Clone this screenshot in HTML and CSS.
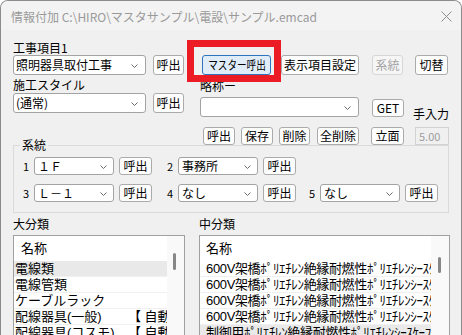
FILE: index.html
```html
<!DOCTYPE html>
<html lang="ja">
<head>
<meta charset="utf-8">
<link rel="stylesheet" href="styles.css">
</head>
<body>
<div class="window">
  <div class="titlebar">
    <span class="title">情報付加 C:\HIRO\マスタサンプル\電設\サンプル.emcad</span>
    <svg class="close" width="11" height="11" viewBox="0 0 11 11"><path d="M0.5 0.5 L10.5 10.5 M10.5 0.5 L0.5 10.5" stroke="#8f8f8f" stroke-width="1" fill="none"/></svg>
  </div>
  <div class="content">
    <div class="top">
      <div class="col-left">
        <div class="label lbl-1">工事項目1</div>
        <div class="row">
          <div class="combo combo-main"><span class="ctext">照明器具取付工事</span><svg class="chev" width="7" height="4" viewBox="0 0 7 4"><path d="M0.5 0.5 L3.5 3.5 L6.5 0.5" stroke="#6a6a6a" fill="none"/></svg></div>
          <div class="btn btn-call-l">呼出</div>
        </div>
        <div class="label lbl-2">施工スタイル</div>
        <div class="row">
          <div class="combo combo-main"><span class="ctext">(通常)</span><svg class="chev" width="7" height="4" viewBox="0 0 7 4"><path d="M0.5 0.5 L3.5 3.5 L6.5 0.5" stroke="#6a6a6a" fill="none"/></svg></div>
          <div class="btn btn-call-l">呼出</div>
        </div>
      </div>
      <div class="col-right">
        <div class="row">
          <div class="master-wrap">
            <div class="btn btn-master"><span class="narrow">マスター呼出</span></div>
            <div class="highlight"></div>
          </div>
          <div class="btn btn-disp">表示項目設定</div>
          <div class="btn btn-kei disabled">系統</div>
          <div class="btn btn-kiri">切替</div>
        </div>
        <div class="label lbl-abbr">略称ー</div>
        <div class="row">
          <div class="combo combo-abbr"><span class="ctext"></span><svg class="chev" width="7" height="4" viewBox="0 0 7 4"><path d="M0.5 0.5 L3.5 3.5 L6.5 0.5" stroke="#6a6a6a" fill="none"/></svg></div>
          <div class="btn btn-get">GET</div>
          <div class="label lbl-manual">手入力</div>
        </div>
        <div class="row row-small">
          <div class="btn sm b-yobi">呼出</div>
          <div class="btn sm b-hozon">保存</div>
          <div class="btn sm b-sakujo">削除</div>
          <div class="btn sm b-zen">全削除</div>
          <div class="btn sm b-ritsu">立面</div>
          <div class="numbox">5.00</div>
        </div>
      </div>
    </div>

    <fieldset class="group">
      <legend>系統</legend>
      <div class="grow">
        <div class="unit u1"><span class="num">1</span><div class="combo combo-s"><span class="ctext">１Ｆ</span><svg class="chev" width="7" height="4" viewBox="0 0 7 4"><path d="M0.5 0.5 L3.5 3.5 L6.5 0.5" stroke="#6a6a6a" fill="none"/></svg></div><div class="btn sm btn-s">呼出</div></div>
        <div class="unit u2"><span class="num">2</span><div class="combo combo-s"><span class="ctext">事務所</span><svg class="chev" width="7" height="4" viewBox="0 0 7 4"><path d="M0.5 0.5 L3.5 3.5 L6.5 0.5" stroke="#6a6a6a" fill="none"/></svg></div><div class="btn sm btn-s">呼出</div></div>
      </div>
      <div class="grow grow-2">
        <div class="unit u1"><span class="num">3</span><div class="combo combo-s"><span class="ctext">Ｌ－１</span><svg class="chev" width="7" height="4" viewBox="0 0 7 4"><path d="M0.5 0.5 L3.5 3.5 L6.5 0.5" stroke="#6a6a6a" fill="none"/></svg></div><div class="btn sm btn-s">呼出</div></div>
        <div class="unit u2"><span class="num">4</span><div class="combo combo-s"><span class="ctext">なし</span><svg class="chev" width="7" height="4" viewBox="0 0 7 4"><path d="M0.5 0.5 L3.5 3.5 L6.5 0.5" stroke="#6a6a6a" fill="none"/></svg></div><div class="btn sm btn-s">呼出</div></div>
        <div class="unit u3"><span class="num">5</span><div class="combo combo-s"><span class="ctext">なし</span><svg class="chev" width="7" height="4" viewBox="0 0 7 4"><path d="M0.5 0.5 L3.5 3.5 L6.5 0.5" stroke="#6a6a6a" fill="none"/></svg></div><div class="btn sm btn-s">呼出</div></div>
      </div>
    </fieldset>

    <div class="bottom">
      <div class="listcol lc-left">
        <div class="label">大分類</div>
        <div class="list list-left">
          <div class="list-body">
            <div class="list-head">名称</div>
            <div class="list-row sel">電線類</div>
            <div class="list-row">電線管類</div>
            <div class="list-row">ケーブルラック</div>
            <div class="list-row"><span class="name">配線器具(一般)</span><span class="extra">【 自動設定】</span></div>
            <div class="list-row"><span class="name">配線器具(コスモ)</span><span class="extra">【 自動設定】</span></div>
          </div>
          <div class="scroll"><div class="thumb"></div></div>
        </div>
      </div>
      <div class="listcol lc-right">
        <div class="label">中分類</div>
        <div class="list list-right">
          <div class="list-body">
            <div class="list-head">名称</div>
            <div class="list-row">600V架橋ﾎﾟﾘｴﾁﾚﾝ絶縁耐燃性ﾎﾟﾘｴﾁﾚﾝｼｰｽｹｰﾌﾞﾙ</div>
            <div class="list-row">600V架橋ﾎﾟﾘｴﾁﾚﾝ絶縁耐燃性ﾎﾟﾘｴﾁﾚﾝｼｰｽｹｰﾌﾞﾙ</div>
            <div class="list-row">600V架橋ﾎﾟﾘｴﾁﾚﾝ絶縁耐燃性ﾎﾟﾘｴﾁﾚﾝｼｰｽｹｰﾌﾞﾙ</div>
            <div class="list-row">600V架橋ﾎﾟﾘｴﾁﾚﾝ絶縁耐燃性ﾎﾟﾘｴﾁﾚﾝｼｰｽｹｰﾌﾞﾙ</div>
            <div class="list-row sel">制御用ﾎﾟﾘｴﾁﾚﾝ絶縁耐燃性ﾎﾟﾘｴﾁﾚﾝｼｰｽｹｰﾌﾞﾙ</div>
          </div>
          <div class="scroll"><div class="thumb"></div></div>
        </div>
      </div>
    </div>
  </div>
</div>
</body>
</html>
```

FILE: styles.css
```css
html, body {
  margin: 0;
  padding: 0;
}
body {
  width: 462px;
  height: 335px;
  overflow: hidden;
  background: #ffffff;
  font-family: "Noto Sans CJK JP", "Noto Sans", sans-serif;
  font-size: 12px;
  color: #000;
}
.window {
  box-sizing: border-box;
  width: 462px;
  height: 350px;
  border: 1px solid #8c8c8c;
  border-bottom: none;
  border-radius: 8px 8px 0 0;
  background: #f0f0f0;
  overflow: hidden;
}
.titlebar {
  height: 29px;
  background: #f3f3f3;
  display: flex;
  align-items: center;
  padding-left: 10px;
  color: #9a9a9a;
}
.title {
  font-size: 12px;
  line-height: 14px;
  padding-top: 2px;
  white-space: nowrap;
}
.close {
  display: block;
  margin-left: auto;
  margin-right: 9px;
  margin-top: 1px;
}
.content {
  padding-left: 12px;
}
.top {
  display: flex;
  height: 107px;
}
.col-left {
  width: 171px;
  padding-top: 11px;
}
.col-right {
  margin-left: 16px;
  padding-top: 25px;
}
.row {
  display: flex;
  align-items: center;
}
.label {
  line-height: 14px;
  height: 14px;
  white-space: nowrap;
}
.lbl-2 {
  margin-top: 3px;
  margin-bottom: 1px;
}
.lbl-abbr {
  margin-top: 4px;
}
.lbl-manual {
  margin-left: 9px;
  margin-top: 14px;
}

/* buttons */
.btn {
  box-sizing: border-box;
  height: 20px;
  border: 1px solid #ababab;
  border-radius: 3px;
  background: #fdfdfd;
  display: flex;
  align-items: center;
  justify-content: center;
  line-height: 14px;
  white-space: nowrap;
  flex: none;
}
.btn.sm {
  height: 18px;
}
.btn.disabled {
  color: #a3a3a3;
  border-color: #d6d6d6;
  background: #f6f6f6;
}
.btn-call-l { width: 31px; margin-left: 7px; }
.master-wrap {
  position: relative;
  margin-left: 2px;
}
.btn-master {
  width: 69px;
  background: #e0edf9;
  border-color: #2c74c0;
}
.narrow {
  display: inline-block;
  transform: scaleX(0.8);
}
.highlight {
  position: absolute;
  left: -15px;
  top: -15px;
  width: 94px;
  height: 42px;
  box-sizing: border-box;
  border: 7px solid #ec1c24;
  pointer-events: none;
}
.btn-disp { width: 78px; margin-left: 10px; }
.btn-kei { width: 31px; margin-left: 13px; }
.btn-kiri { width: 33px; margin-left: 12px; }
.btn-get { width: 32px; margin-left: 13px; height: 18px; margin-top: 2px; }

.row-small { margin-top: 6px; }
.b-yobi { width: 32px; margin-left: 3px; }
.b-hozon { width: 32px; margin-left: 6px; }
.b-sakujo { width: 31px; margin-left: 6px; }
.b-zen { width: 42px; margin-left: 7px; }
.b-ritsu { width: 33px; margin-left: 12px; }
.numbox {
  box-sizing: border-box;
  width: 34px;
  height: 18px;
  margin-left: 11px;
  border: 1px solid #d3d3d3;
  background: #f0f0f0;
  color: #9d9d9d;
  font-size: 11px;
  line-height: 16px;
  padding-left: 3px;
}

/* combos */
.combo {
  box-sizing: border-box;
  height: 20px;
  border: 1px solid #a3a3a3;
  border-radius: 3px;
  background: #fff;
  display: flex;
  align-items: center;
  padding-left: 2px;
  flex: none;
}
.ctext {
  line-height: 14px;
  white-space: nowrap;
}
.chev {
  display: block;
  margin-left: auto;
  margin-right: 7px;
  margin-top: 1px;
}
.combo-main { width: 133px; }
.combo-abbr { width: 159px; }

/* group */
.group {
  box-sizing: border-box;
  width: 436px;
  height: 75px;
  margin: 1px 0 0 0;
  padding: 5px 0 0 8px;
  border: 1px solid #dadada;
  min-width: 0;
}
.group legend {
  padding: 0 2px;
  margin-left: -2px;
  line-height: 14px;
}
.grow {
  display: flex;
  height: 18px;
}
.grow-2 {
  margin-top: 9px;
}
.unit {
  display: flex;
  align-items: center;
}
.unit.u2 { margin-left: 14px; }
.unit.u3 { margin-left: 12px; }
.num {
  box-sizing: border-box;
  width: 12px;
  padding-right: 4px;
  text-align: center;
  font-size: 11px;
  line-height: 14px;
}
.combo-s {
  width: 80px;
  height: 18px;
  padding-left: 3px;
}
.combo-s .chev { margin-right: 6px; }
.btn-s { width: 33px; margin-left: 5px; }

/* bottom lists */
.bottom {
  display: flex;
  margin-top: 4px;
}
.lc-left { width: 172px; }
.lc-right { margin-left: 14px; }
.list {
  box-sizing: border-box;
  margin-top: 4px;
  border: 1px solid #a0a0a0;
  background: #fff;
  height: 110px;
  display: flex;
  font-family: "Liberation Sans", "Noto Sans CJK JP", sans-serif;
}
.list-left { width: 172px; }
.list-right { width: 251px; }
.list-body {
  flex: 1;
  min-width: 0;
  overflow: hidden;
}
.list-head {
  height: 25px;
  line-height: 25px;
  font-size: 13px;
  padding-left: 7px;
}
.list-row {
  box-sizing: border-box;
  height: 16px;
  line-height: 15px;
  border-bottom: 1px solid #f0f0f0;
  font-size: 13px;
  white-space: nowrap;
  padding-left: 1px;
  display: flex;
  overflow: hidden;
}
.list-right .list-head,
.list-right .list-row {
  padding-left: 6px;
}
.list-right .list-row {
  letter-spacing: -0.35px;
}
.list-row.sel {
  background: #e9e9e9;
}
.name {
  width: 113px;
  flex: none;
}
.scroll {
  width: 17px;
  background: #f9f9f9;
  flex: none;
}
.list-right .scroll { width: 18px; }
.thumb {
  width: 3px;
  height: 17px;
  margin: 17px 0 0 6px;
  background: #878787;
  border-radius: 2px;
}
.list-right .thumb {
  margin: 21px 0 0 7px;
  height: 16px;
}
```
